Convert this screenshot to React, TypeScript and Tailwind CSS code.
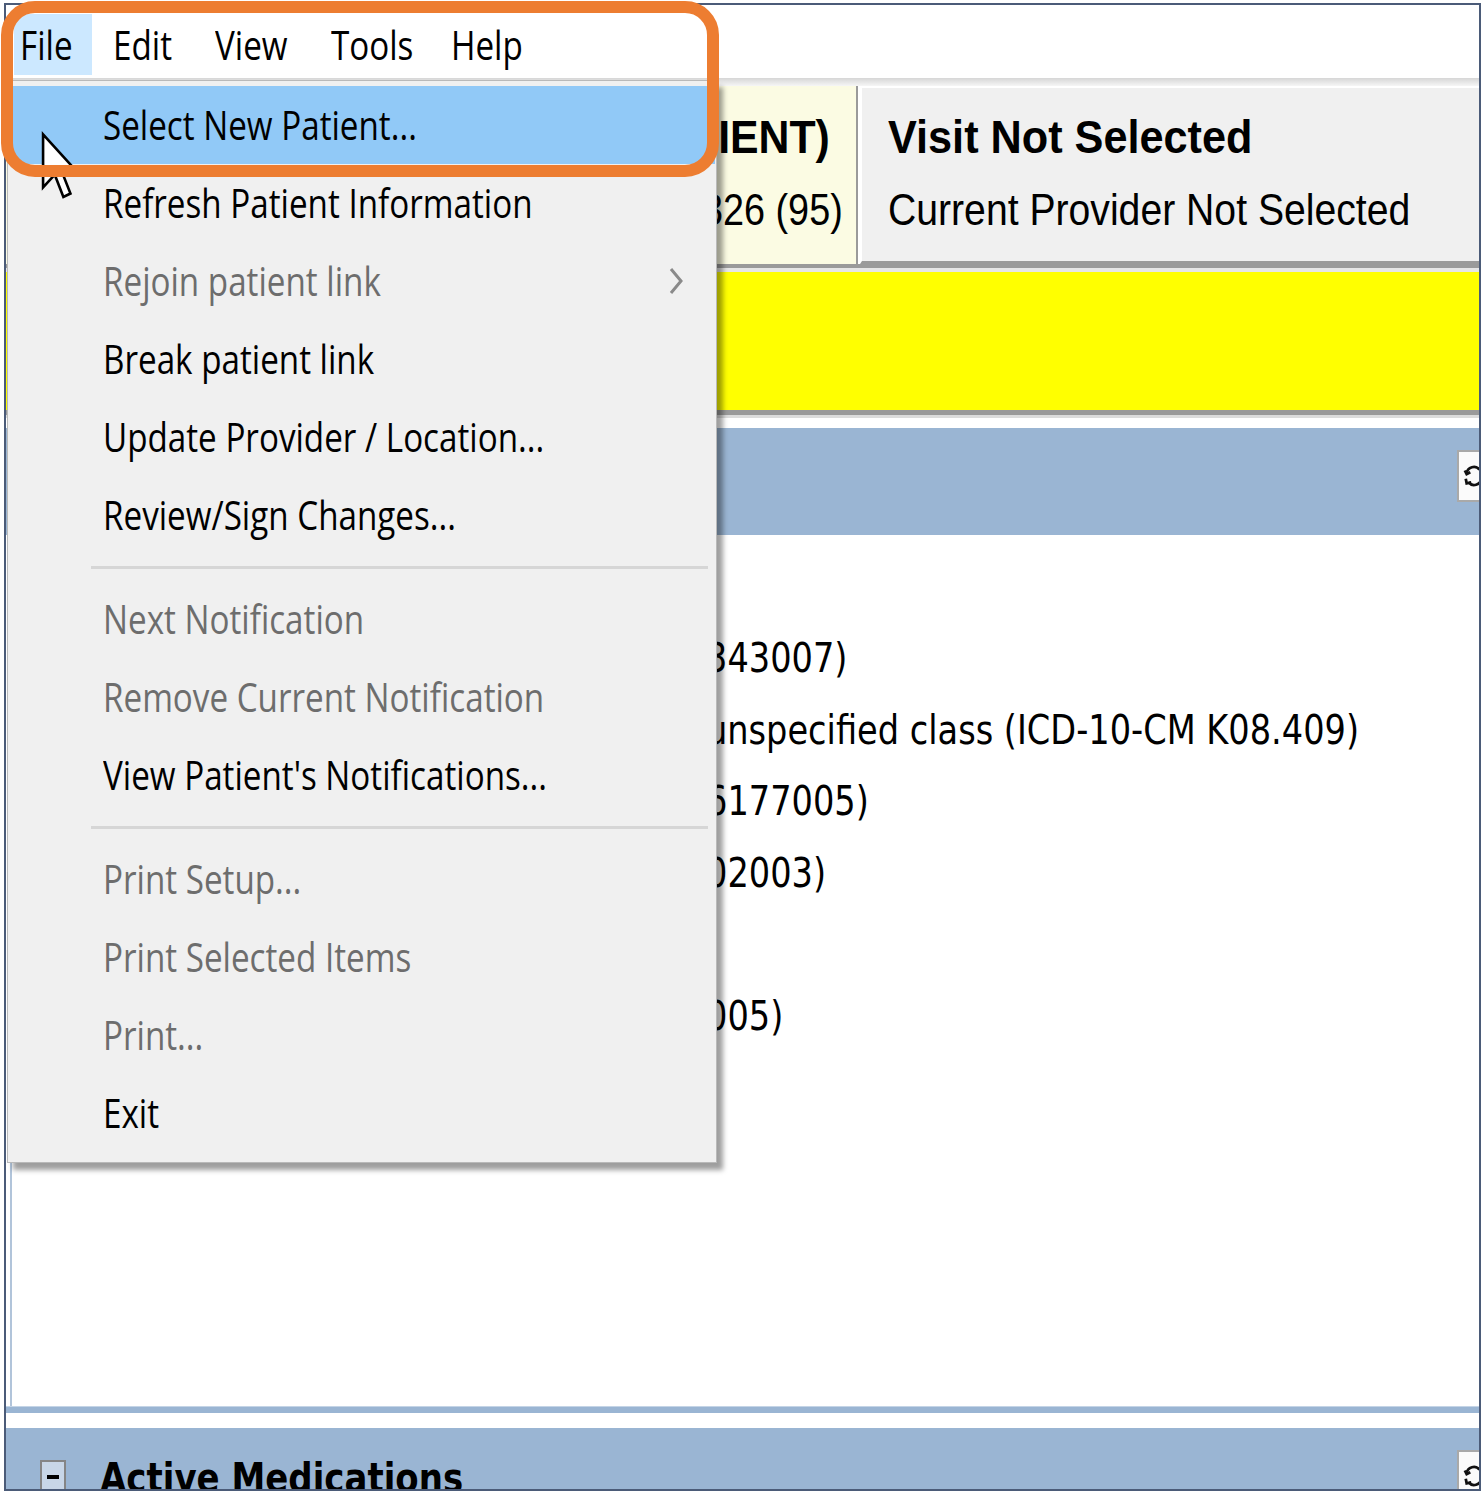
import React from "react";

type Item = { t: string; active?: boolean; disabled?: boolean; sub?: boolean } | "sep";

const items: Item[] = [
  { t: "Select New Patient...", active: true },
  { t: "Refresh Patient Information" },
  { t: "Rejoin patient link", disabled: true, sub: true },
  { t: "Break patient link" },
  { t: "Update Provider / Location..." },
  { t: "Review/Sign Changes..." },
  "sep",
  { t: "Next Notification", disabled: true },
  { t: "Remove Current Notification", disabled: true },
  { t: "View Patient's Notifications..." },
  "sep",
  { t: "Print Setup...", disabled: true },
  { t: "Print Selected Items", disabled: true },
  { t: "Print...", disabled: true },
  { t: "Exit" },
];

const rows: { pre: string; suf: string }[] = [
  { pre: "Hyperlipidemia (SCT 55822004)", suf: "" },
  { pre: "Low back pain (SCT 279", suf: "343007)" },
  { pre: "Complete loss of teeth, unspecified cause, ", suf: "unspecified class (ICD-10-CM K08.409)" },
  { pre: "Depressive disorder (SCT 3", suf: "6177005)" },
  { pre: "Chronic kidney disease (SCT 7", suf: "02003)" },
  { pre: "Tobacco use (SCT 110483000)", suf: "" },
  { pre: "Type 2 diabetes mellitus (SCT 44054", suf: "005)" },
];

function M({ children }: { children: React.ReactNode }) {
  return (
    <span className="inline-block whitespace-nowrap origin-left scale-x-[0.83] text-[40px] leading-none font-['Open_Sans',sans-serif]">
      {children}
    </span>
  );
}

function RefreshBtn() {
  return (
    <div className="w-[30px] h-[52px] shrink-0 bg-[#fbfbfb] border-2 border-[#a9a9a9] -mr-[8px] overflow-hidden flex items-center pl-[4px]">
      <svg width="34" height="40" viewBox="0 0 24 28" fill="none" stroke="#111" strokeWidth="3">
        <path d="M4 11 A8 8 0 0 1 18 7" />
        <path d="M2 8 L4 12 L8 10" />
        <path d="M20 17 A8 8 0 0 1 6 21" />
        <path d="M3 17 L4 22 L9 21" />
      </svg>
    </div>
  );
}

export default function App() {
  return (
    <div className="relative w-[1483px] h-[1493px] bg-white overflow-hidden pl-[4px] pt-[3px] text-black">
      <div className="w-[1477px] h-[1488px] border-2 border-[#4b5b78] flex flex-col overflow-hidden bg-white">
        {/* Menu bar */}
        <div className="h-[73px] shrink-0 bg-white flex items-start">
          <div className="mt-[9px] h-[61px] ml-[8px] w-[78px] bg-[#cce8ff] flex items-center pl-[6px]">
            <M>File</M>
          </div>
          <div className="mt-[9px] h-[61px] w-[102px] flex items-center pl-[21px]">
            <M>Edit</M>
          </div>
          <div className="mt-[9px] h-[61px] w-[116px] flex items-center pl-[21px]">
            <M>View</M>
          </div>
          <div className="mt-[9px] h-[61px] w-[120px] flex items-center pl-[21px]">
            <M>Tools</M>
          </div>
          <div className="mt-[9px] h-[61px] w-[120px] flex items-center pl-[21px]">
            <M>Help</M>
          </div>
        </div>
        <div className="h-[8px] shrink-0 bg-linear-to-b from-[#d6d6d6] to-[#f6f6f6]" />

        {/* Patient / visit panels */}
        <div className="h-[178px] shrink-0 flex bg-white">
          <div className="w-[852px] shrink-0 bg-[#fbfbe3] border-r-2 border-[#9a9a9a] flex flex-col items-end overflow-hidden font-['Liberation_Sans',Arial,sans-serif]">
            <div className="mt-[26px] h-[50px] pr-[26px] flex items-center">
              <span className="inline-block whitespace-nowrap origin-right scale-x-[0.93] text-[46px] leading-none font-bold">
                ZZTEST,PATIENT (OUTPATIENT)
              </span>
            </div>
            <div className="mt-[22px] h-[50px] pr-[13px] flex items-center">
              <span className="inline-block whitespace-nowrap origin-right scale-x-[0.84] text-[45px] leading-none">
                666-00-0326 (95)
              </span>
            </div>
          </div>
          <div className="w-[2px] shrink-0 bg-white" />
          <div className="flex-1 bg-[#f0f0f0] border-l-2 border-t-2 border-l-white border-t-white border-b-[3px] border-b-[#9a9a9a] flex flex-col pl-[26px] font-['Liberation_Sans',Arial,sans-serif]">
            <div className="mt-[24px] h-[50px] flex items-center">
              <span className="inline-block whitespace-nowrap origin-left scale-x-[0.94] text-[46px] leading-none font-bold">
                Visit Not Selected
              </span>
            </div>
            <div className="mt-[22px] h-[50px] flex items-center">
              <span className="inline-block whitespace-nowrap origin-left scale-x-[0.87] text-[45px] leading-none">
                Current Provider Not Selected
              </span>
            </div>
          </div>
        </div>

        <div className="h-[8px] shrink-0 flex flex-col">
          <div className="h-[4px] bg-[#9a9a9a]" />
          <div className="h-[4px] bg-[#e6e6e6]" />
        </div>
        {/* Yellow alert bar */}
        <div className="h-[138px] shrink-0 bg-[#ffff00]" />
        <div className="h-[8px] shrink-0 flex flex-col">
          <div className="h-[5px] bg-[#9a9a9a]" />
          <div className="h-[3px] bg-[#dcdcdc]" />
        </div>
        <div className="h-[10px] shrink-0 bg-white" />

        {/* Problems header */}
        <div className="h-[107px] shrink-0 bg-[#9ab5d3] flex justify-end items-start pt-[22px] overflow-hidden">
          <RefreshBtn />
        </div>
        {/* Problems content */}
        <div className="h-[871px] shrink-0 ml-[4px] border-l-2 border-[#b1c4da] bg-white pt-[16px] font-['DejaVu_Sans',Verdana,sans-serif] overflow-hidden">
          {rows.map((r, i) => (
            <div key={i} className="h-[71.5px] flex items-center">
              <div className="w-[694px] shrink-0 text-right whitespace-nowrap overflow-hidden text-[34px] pr-[2px]">
                {r.pre}
              </div>
              {r.suf && (
                <span className="inline-block whitespace-nowrap origin-left scale-x-[0.84] text-[40px] leading-none">
                  {r.suf}
                </span>
              )}
            </div>
          ))}
        </div>
        <div className="h-[7px] shrink-0 bg-[#9ab5d3] border-t border-[#c4d4e6]" />
        <div className="h-[15px] shrink-0 bg-white" />

        {/* Active Medications header */}
        <div className="h-[61px] shrink-0 bg-[#9ab5d3] flex items-start overflow-hidden">
          <div className="ml-[34px] mt-[32px] w-[26px] h-[40px] shrink-0 border-2 border-[#858585] bg-[#c8d6e7] flex justify-center pt-[13px]">
            <div className="w-[12px] h-[4px] bg-black" />
          </div>
          <div className="ml-[34px] mt-[30px] flex-1">
            <span className="inline-block whitespace-nowrap origin-left scale-x-[0.85] text-[40px] leading-none font-bold font-['DejaVu_Sans',Verdana,sans-serif]">
              Active Medications
            </span>
          </div>
          <div className="mt-[22px]">
            <RefreshBtn />
          </div>
        </div>
      </div>

      {/* File dropdown menu */}
      <div className="absolute left-[7px] top-[80px] w-[710px] bg-[#f0f0f0] border border-[#b9b9b9] shadow-[6px_7px_5px_rgba(0,0,0,0.38)] pt-[5px] pb-[10px] px-[1px]">
        {items.map((it, i) =>
          it === "sep" ? (
            <div key={i} className="h-[26px] flex items-center">
              <div className="ml-[82px] mr-[7px] flex-1 h-[3px] bg-[#d6d6d6]" />
            </div>
          ) : (
            <div
              key={i}
              className={
                "h-[78px] flex items-center pl-[94px] " +
                (it.active ? "bg-[#91c9f7] " : "") +
                (it.disabled ? "text-[#6d6d6d]" : "text-black")
              }
            >
              <div className="flex-1">
                <M>{it.t}</M>
              </div>
              {it.sub && (
                <svg width="18" height="32" viewBox="0 0 18 32" className="mr-[30px]" fill="none" stroke="#8a8a8a" strokeWidth="3">
                  <polyline points="4,4 14,16 4,28" />
                </svg>
              )}
            </div>
          )
        )}
      </div>

      {/* Mouse cursor */}
      <svg
        className="absolute left-[40px] top-[131px]"
        width="40"
        height="70"
        viewBox="0 0 13 20.5"
        preserveAspectRatio="none"
      >
        <path
          d="M1 1 L1 16.5 L4.8 12.8 L7.6 19.3 L9.9 18.3 L7.1 11.9 L12 11.9 Z"
          fill="white"
          stroke="black"
          strokeWidth="2.6"
          vectorEffect="non-scaling-stroke"
          strokeLinejoin="miter"
        />
      </svg>

      {/* Orange highlight outline */}
      <div className="absolute left-[1px] top-[1px] w-[718px] h-[176px] border-[12px] border-[#ed7d31] rounded-[34px]" />
    </div>
  );
}
